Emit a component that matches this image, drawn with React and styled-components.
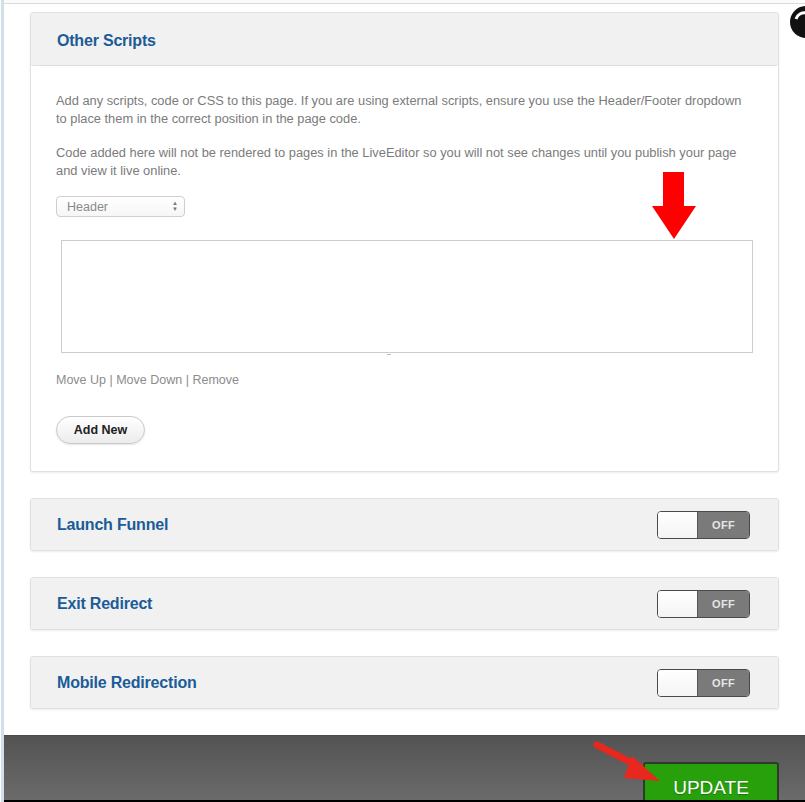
import styled, { createGlobalStyle } from "styled-components";

const GlobalStyle = createGlobalStyle`
  html, body {
    margin: 0;
    padding: 0;
    background: #fff;
    font-family: "Liberation Sans", Arial, sans-serif;
  }
`;

const Window = styled.div`
  position: relative;
  height: 802px;
  overflow: hidden;
  box-sizing: border-box;
  border-left: 3px solid #d3dfe8;
  margin-left: 1px;
  display: flex;
  flex-direction: column;
`;

const TopEdge = styled.div`
  height: 3px;
  border-bottom: 1px solid #d6dde3;
  background: #fbfbfb;
  flex-shrink: 0;
`;

const Content = styled.div`
  flex: 1;
  padding: 8px 22px 0 26px;
  display: flex;
  flex-direction: column;
  gap: 26px;
`;

const Panel = styled.div`
  position: relative;
  width: 749px;
  box-sizing: border-box;
  border: 1px solid #e0e0e0;
  border-radius: 3px;
  box-shadow: 0 1px 2px rgba(0, 0, 0, 0.08);
  background: #fff;
`;

const PanelHeader = styled.div`
  display: flex;
  align-items: center;
  justify-content: space-between;
  box-sizing: border-box;
  height: ${(p) => (p.$tall ? 53 : 51)}px;
  padding: ${(p) => (p.$tall ? "3px" : "0")} 28px 0 26px;
  background: #f1f1f1;
  border-bottom: ${(p) => (p.$open ? "1px solid #dedede" : "none")};
  border-radius: 3px;
`;

const Title = styled.h3`
  margin: 0;
  font-size: 16px;
  font-weight: bold;
  color: #1b5c97;
  letter-spacing: -0.2px;
`;

const PanelBody = styled.div`
  position: relative;
  padding: 26px 25px 27px 25px;
`;

const Text = styled.p`
  margin: 0 0 16px;
  font-size: 12.85px;
  line-height: 18px;
  color: #7b7b7b;
  white-space: nowrap;
`;

const Select = styled.div`
  display: flex;
  align-items: center;
  justify-content: space-between;
  width: 129px;
  height: 21px;
  box-sizing: border-box;
  padding: 0 6px 0 10px;
  border: 1px solid #cfcfcf;
  border-radius: 4px;
  background: linear-gradient(#fff, #f6f6f6);
  font-size: 12.5px;
  color: #8a8a8a;
`;

const Spinner = styled.span`
  display: flex;
  flex-direction: column;
  gap: 1px;
  font-size: 6px;
  line-height: 5px;
  color: #777;
`;

const CodeArea = styled.div`
  margin: 23px 0 0 5px;
  width: 692px;
  height: 113px;
  box-sizing: border-box;
  border: 1px solid #cdcdcd;
  background: #fff;
`;

const ResizeDot = styled.div`
  width: 4px;
  height: 1px;
  margin: 1px 0 0 331px;
  background: #bbb;
`;

const Links = styled.div`
  margin-top: 16px;
  font-size: 12.5px;
  line-height: 18px;
  color: #8c8c8c;
`;

const AddButton = styled.button`
  margin-top: 27px;
  width: 89px;
  height: 28px;
  border: 1px solid #c9c9c9;
  border-radius: 14px;
  background: linear-gradient(#ffffff, #ececec);
  box-shadow: 0 1px 2px rgba(0, 0, 0, 0.1);
  font-family: "Liberation Sans", Arial, sans-serif;
  font-size: 12.5px;
  font-weight: bold;
  color: #222;
`;

const Toggle = styled.div`
  display: flex;
  width: 93px;
  height: 28px;
  box-sizing: border-box;
  border: 1px solid #4a4a4a;
  border-radius: 4px;
  overflow: hidden;
`;

const ToggleKnob = styled.div`
  width: 39px;
  background: linear-gradient(#fff, #f4f4f4);
  border-right: 1px solid #555;
`;

const ToggleState = styled.div`
  flex: 1;
  display: flex;
  align-items: center;
  justify-content: center;
  background: #7a7a7a;
  font-size: 11px;
  font-weight: bold;
  color: #e6e6e6;
  letter-spacing: 0.3px;
`;

const Footer = styled.div`
  position: relative;
  margin-top: 26px;
  height: 64px;
  overflow: hidden;
  flex-shrink: 0;
  border-top: 1px solid #4a4a4a;
  background: linear-gradient(#535353, #6b6b6b);
  display: flex;
  justify-content: flex-end;
  padding-right: 26px;
`;

const UpdateButton = styled.button`
  margin-top: 26px;
  width: 136px;
  height: 48px;
  border: 2px solid #2e3a2a;
  border-radius: 3px;
  background: #28a00c;
  color: #fff;
  font-family: "Liberation Sans", Arial, sans-serif;
  font-size: 19px;
  padding: 4px 0 0;
  text-shadow: 0 1px 1px rgba(0, 0, 0, 0.3);
`;

const BottomBar = styled.div`
  height: 3px;
  background: #000;
  flex-shrink: 0;
`;

const DownArrow = styled.svg`
  position: absolute;
  left: 620px;
  top: 106px;
`;

const CornerArrow = styled.svg`
  position: absolute;
  left: 584px;
  top: 5px;
`;

const CloseBadge = styled.svg`
  position: absolute;
  right: 0;
  top: 4px;
`;

const toggles = ["Launch Funnel", "Exit Redirect", "Mobile Redirection"];

const App = () => (
  <>
    <GlobalStyle />
    <Window>
      <TopEdge />
      <Content>
        <Panel>
          <PanelHeader $open $tall>
            <Title>Other Scripts</Title>
          </PanelHeader>
          <PanelBody>
            <Text>
              Add any scripts, code or CSS to this page. If you are using external scripts, ensure you use the Header/Footer dropdown
              <br />
              to place them in the correct position in the page code.
            </Text>
            <Text>
              Code added here will not be rendered to pages in the LiveEditor so you will not see changes until you publish your page
              <br />
              and view it live online.
            </Text>
            <Select>
              Header
              <Spinner>
                <span>▲</span>
                <span>▼</span>
              </Spinner>
            </Select>
            <CodeArea />
            <ResizeDot />
            <Links>Move Up | Move Down | Remove</Links>
            <AddButton>Add New</AddButton>
            <DownArrow width="46" height="68" viewBox="0 0 46 68">
              <polygon points="12,0 33,0 33,34 45,34 23,67 1,34 12,34" fill="#ff0000" />
            </DownArrow>
          </PanelBody>
        </Panel>
        {toggles.map((name) => (
          <Panel key={name}>
            <PanelHeader>
              <Title>{name}</Title>
              <Toggle>
                <ToggleKnob />
                <ToggleState>OFF</ToggleState>
              </Toggle>
            </PanelHeader>
          </Panel>
        ))}
      </Content>
      <Footer>
        <UpdateButton>UPDATE</UpdateButton>
        <CornerArrow width="80" height="50" viewBox="0 0 80 50">
          <line x1="9" y1="4" x2="52" y2="26" stroke="#e8281e" strokeWidth="7" strokeLinecap="round" />
          <polygon points="44,15 72,40 36,37" fill="#e8281e" />
        </CornerArrow>
      </Footer>
      <BottomBar />
      <CloseBadge width="18" height="36" viewBox="0 0 18 36">
        <circle cx="19" cy="18" r="16" fill="#111" />
        <path d="M9 15 a9 9 0 0 1 11 -6" stroke="#fff" strokeWidth="3" fill="none" />
      </CloseBadge>
    </Window>
  </>
);

export default App;
